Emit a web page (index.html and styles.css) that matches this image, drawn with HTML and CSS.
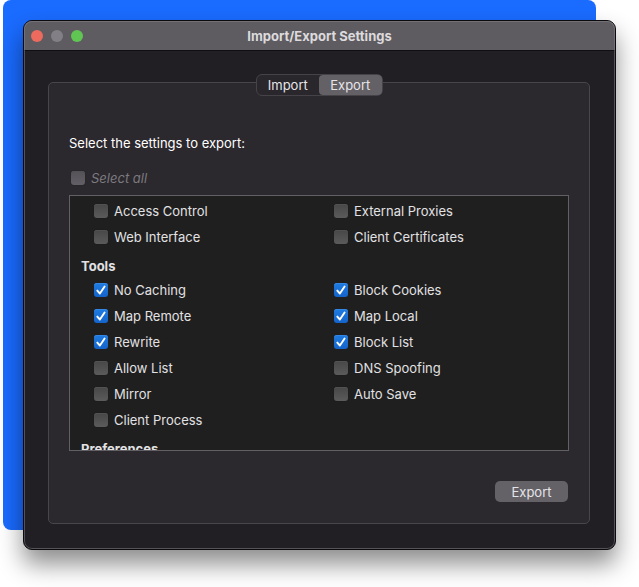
FILE: index.html
```
<!DOCTYPE html>
<html lang="en">
<head>
<meta charset="utf-8">
<title>Import/Export Settings</title>
<link rel="stylesheet" href="styles.css">
</head>
<body>
<svg class="defs" aria-hidden="true"><symbol id="tick" viewBox="0 0 14 14"><path d="M3.3 7.6 5.9 10.5 10.6 3.5" fill="none" stroke="#fff" stroke-width="1.9" stroke-linecap="round" stroke-linejoin="round"/></symbol></svg>
<div class="stage">
  <div class="backdrop"></div>
  <main class="window">
    <header class="titlebar">
      <div class="lights">
        <button class="light close" type="button" aria-label="Close"></button>
        <button class="light minimize" type="button" aria-label="Minimize" disabled></button>
        <button class="light maximize" type="button" aria-label="Zoom"></button>
      </div>
      <h1 class="title">Import/Export Settings</h1>
    </header>
    <div class="content">
      <div class="tabs" role="tablist">
        <button class="tab" type="button" role="tab" aria-selected="false">Import</button>
        <button class="tab selected" type="button" role="tab" aria-selected="true">Export</button>
      </div>
      <form class="panel">
        <p class="prompt">Select the settings to export:</p>
        <label class="option select-all"><span class="box"><input type="checkbox"><svg><use href="#tick"/></svg></span>Select all</label>
        <div class="list">
          <div class="group">
            <label class="option"><span class="box"><input type="checkbox"><svg><use href="#tick"/></svg></span>Access Control</label>
            <label class="option"><span class="box"><input type="checkbox"><svg><use href="#tick"/></svg></span>External Proxies</label>
            <label class="option"><span class="box"><input type="checkbox"><svg><use href="#tick"/></svg></span>Web Interface</label>
            <label class="option"><span class="box"><input type="checkbox"><svg><use href="#tick"/></svg></span>Client Certificates</label>
          </div>
          <h2 class="heading">Tools</h2>
          <div class="group">
            <label class="option"><span class="box"><input type="checkbox" checked><svg><use href="#tick"/></svg></span>No Caching</label>
            <label class="option"><span class="box"><input type="checkbox" checked><svg><use href="#tick"/></svg></span>Block Cookies</label>
            <label class="option"><span class="box"><input type="checkbox" checked><svg><use href="#tick"/></svg></span>Map Remote</label>
            <label class="option"><span class="box"><input type="checkbox" checked><svg><use href="#tick"/></svg></span>Map Local</label>
            <label class="option"><span class="box"><input type="checkbox" checked><svg><use href="#tick"/></svg></span>Rewrite</label>
            <label class="option"><span class="box"><input type="checkbox" checked><svg><use href="#tick"/></svg></span>Block List</label>
            <label class="option"><span class="box"><input type="checkbox"><svg><use href="#tick"/></svg></span>Allow List</label>
            <label class="option"><span class="box"><input type="checkbox"><svg><use href="#tick"/></svg></span>DNS Spoofing</label>
            <label class="option"><span class="box"><input type="checkbox"><svg><use href="#tick"/></svg></span>Mirror</label>
            <label class="option"><span class="box"><input type="checkbox"><svg><use href="#tick"/></svg></span>Auto Save</label>
            <label class="option"><span class="box"><input type="checkbox"><svg><use href="#tick"/></svg></span>Client Process</label>
          </div>
          <h2 class="heading">Preferences</h2>
        </div>
        <button class="submit" type="button">Export</button>
      </form>
    </div>
  </main>
</div>
</body>
</html>
```
FILE: styles.css
```
* {
  box-sizing: border-box;
}

body {
  margin: 0;
  background: #fff;
  color: #e2e1e3;
  font: 13px/16px Inter, "Liberation Sans", sans-serif;
}

button {
  border: 0;
  padding: 0;
  color: #e6e4e8;
  font: inherit;
}

.defs {
  display: none;
}

.stage {
  position: relative;
  min-height: 100vh;
  padding: 20px 23px 37px;
  overflow: hidden;
}

.backdrop {
  position: absolute;
  inset: 0 43px 57px 3px;
  border-radius: 8px;
  background: #1a6bff;
}

.window {
  position: relative;
  min-height: calc(100vh - 57px);
  display: flex;
  flex-direction: column;
  border: 1px solid #0b0b0d;
  border-radius: 9px;
  background: #211e24;
  box-shadow: inset 0 0 0 1px #55525a, 0 14px 24px rgba(0, 0, 0, 0.45);
}

.titlebar {
  height: 30px;
  display: grid;
  grid-template-columns: 1fr auto 1fr;
  align-items: center;
  border: 1px solid #737176;
  border-bottom-color: #0f0e11;
  border-radius: 8px 8px 0 0;
  background: #5e5c60;
}

.lights {
  display: flex;
  gap: 8px;
  padding-left: 6px;
}

.light {
  width: 12px;
  height: 12px;
  border-radius: 50%;
}

.close {
  background: #ec6a5e;
}

.minimize {
  background: #828086;
}

.maximize {
  background: #61c554;
}

.title {
  margin: 0;
  color: #dcdadd;
  font-size: 13px;
  font-weight: 700;
}

.content {
  flex: 1;
  display: flex;
  flex-direction: column;
  align-items: center;
  padding: 23px 25px 25px 24px;
}

.tabs {
  position: relative;
  display: grid;
  grid-template-columns: 1fr 1fr;
  height: 22px;
  width: 127px;
  margin-bottom: -14px;
  border: 1px solid #454248;
  border-radius: 6px;
  background: #29262c;
}

.tab {
  border-radius: 5px 0 0 5px;
  background: transparent;
}

.tab.selected {
  border-radius: 4px;
  background: #636066;
}

.panel {
  flex: 1;
  align-self: stretch;
  display: flex;
  flex-direction: column;
  padding: 52px 20px 21px;
  border: 1px solid #48454b;
  border-radius: 5px;
  background: #2b282e;
}

.prompt {
  margin: 0 0 14px;
  line-height: 16px;
  color: #fff;
}

.option {
  display: flex;
  align-items: center;
  gap: 6px;
  height: 26px;
}

.select-all {
  margin: 0 0 4px 2px;
  color: #7c7a7f;
  font-style: italic;
}

.box {
  display: grid;
  width: 14px;
  height: 14px;
}

.box input,
.box svg {
  grid-area: 1 / 1;
  width: 14px;
  height: 14px;
  margin: 0;
}

.box input {
  appearance: none;
  border-radius: 3px;
  background: linear-gradient(#474747, #5b5b5b);
  box-shadow: inset 0 1px #525252, 0 0 1px #151515;
}

.select-all input {
  background: linear-gradient(#545157, #625f66);
}

.box input:checked {
  background: linear-gradient(#1f7be0, #1464cb);
  box-shadow: inset 0 1px #3487e4;
}

.box svg {
  pointer-events: none;
  visibility: hidden;
}

.box input:checked + svg {
  visibility: visible;
}

.list {
  flex: 1 1 0;
  min-height: 120px;
  padding: 2px 0 0 11px;
  overflow: hidden;
  border: 1px solid #626064;
  background: #1f1f1f;
}

.group {
  display: grid;
  grid-template-columns: 1fr 1fr;
  column-gap: 6px;
  padding-left: 13px;
}

.heading {
  margin: 0;
  padding-top: 5px;
  font-size: 13px;
  font-weight: 700;
  line-height: 22px;
}

.submit {
  align-self: flex-end;
  width: 73px;
  height: 21px;
  margin: 30px 1px 0 0;
  border-radius: 5px;
  background: #646167;
}
```
